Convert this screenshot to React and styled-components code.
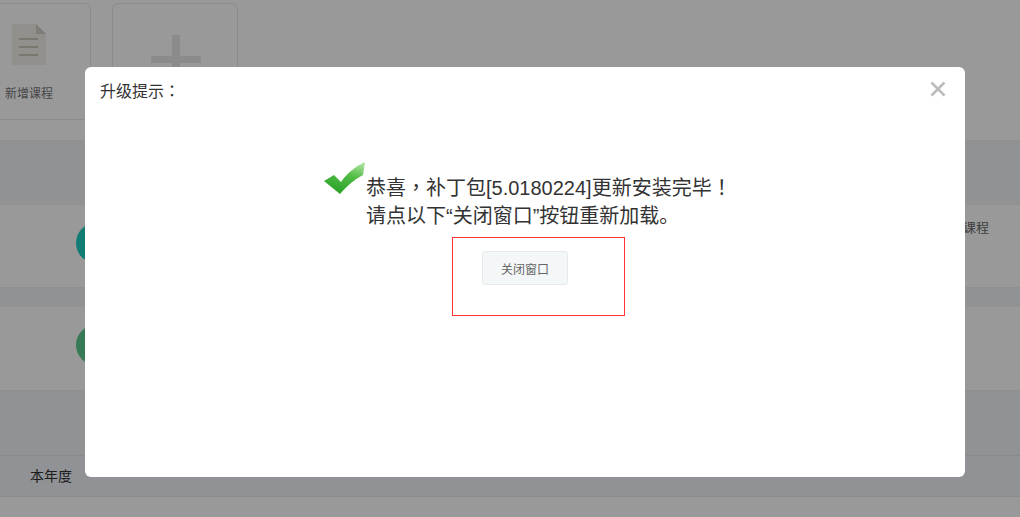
import React from "react";
import styled, { createGlobalStyle } from "styled-components";

const Global = createGlobalStyle`
  html, body { margin: 0; padding: 0; height: 100%; overflow: hidden; background: #fff; }
  body { font-family: "Liberation Sans", "Noto Sans CJK SC", sans-serif; color: #333; }
`;
const Page = styled.div`position: relative; width: 1020px; height: 517px; overflow: hidden; background: #fff;`;
const Shortcuts = styled.div`display: flex; gap: 21px; height: 141px; box-sizing: border-box; padding: 3px 0 0; margin-left: -35px; border-bottom: 1px solid #eee;`;
const Shortcut = styled.div`
  box-sizing: border-box; width: 126px; height: 117px; border: 1px solid #e8e8e8; border-radius: 6px; padding-left: ${p => p.$nudge || 0}px;
  display: flex; flex-direction: column; align-items: center; color: #777; font-size: 12px; overflow: hidden;
`;
const ShortcutLabel = styled.div`margin-top: 19px; line-height: 18px;`;
const DocIcon = styled.svg`width: 36px; height: 42px; margin-top: 20px; display: block;`;
const PlusIcon = styled.svg`width: 50px; height: 50px; margin-top: 31px; display: block;`;
const Band = styled.div`height: ${p => p.$h}px; background: #f2f4f7;`;
const Row = styled.div`
  height: ${p => p.$h}px; background: #fff; box-sizing: border-box; display: flex; justify-content: space-between;
  padding: 0 31px 0 76px; border-bottom: 1px solid #eee;
`;
const Dot = styled.div`width: 40px; height: 40px; border-radius: 50%; background: ${p => p.$c}; margin-top: 18px;`;
const RowAction = styled.div`font-size: 13px; color: #666; line-height: 16px; margin-top: 15px;`;
const TableHead = styled.div`
  height: 42px; box-sizing: border-box; background: #f0f3f9; border-top: 1px solid #e4e6ea; border-bottom: 1px solid #e4e6ea;
  padding-left: 30px; font-size: 14px; line-height: 40px; color: #333;
`;
const Overlay = styled.div`position: absolute; inset: 0; background: rgba(0,0,0,.4);`;
const Modal = styled.div`
  position: absolute; left: 85px; top: 67px; width: 880px; height: 410px; background: #fff; border-radius: 6px;
  box-sizing: border-box; padding: 15px 15px; color: #333;
`;
const ModalTitle = styled.div`font-size: 16px; line-height: 20px; color: #333;`;
const Punct = styled.span`font-family: "Noto Sans CJK TC", sans-serif; line-height: 0;`;
const CloseButton = styled.svg`position: absolute; right: 19px; top: 14px; width: 16px; height: 16px;`;
const Message = styled.div`display: flex; justify-content: center; margin-top: 59px;`;
const CheckIcon = styled.svg`width: 42px; height: 34px; flex: none; display: block;`;
const MessageText = styled.div`font-size: 20px; line-height: 28px; margin-top: 13px; color: #333; width: 360px; white-space: nowrap;`;
const ActionBox = styled.div`
  box-sizing: border-box; width: 173px; height: 79px; border: 1px solid #f33; margin: 7px 0 0 352px; padding: 13px 0 0 29px;
`;
const CloseWindow = styled.button`
  box-sizing: border-box; width: 86px; height: 34px; border: 1px solid #e6eaed; border-radius: 3px; background: #f4f7f8;
  font: 12px "Liberation Sans", "Noto Sans CJK SC", sans-serif; color: #666; padding: 0; display: block;
`;

export default function App() {
  return (
    <Page>
      <Global />
      <Shortcuts>
        <Shortcut $nudge={2}>
          <DocIcon viewBox="0 0 36 42">
            <path d="M1 0H25L35 10V41H1Z" fill="#f4f0eb" />
            <path d="M25 0L35 10H25Z" fill="#d8cfc4" />
            <path d="M8 15H27M8 23H27M8 31H27" stroke="#cfc6ba" strokeWidth="2" />
          </DocIcon>
          <ShortcutLabel>新增课程</ShortcutLabel>
        </Shortcut>
        <Shortcut $nudge={2}>
          <PlusIcon viewBox="0 0 50 50">
            <path d="M21 0H29V21H50V28H29V50H21V28H0V21H21Z" fill="#e8e8e8" />
          </PlusIcon>
        </Shortcut>
      </Shortcuts>
      <Band $h={64} />
      <Row $h={83}>
        <Dot $c="#1fd0c4" />
        <RowAction>课程</RowAction>
      </Row>
      <Band $h={19} />
      <Row $h={84}>
        <Dot $c="#5fcb8f" />
      </Row>
      <Band $h={64} />
      <TableHead>本年度</TableHead>
      <Overlay />
      <Modal>
        <ModalTitle>升级提示<Punct>：</Punct></ModalTitle>
        <CloseButton viewBox="0 0 16 16">
          <path d="M1.5 1.5L14.5 14.5M14.5 1.5L1.5 14.5" stroke="#bdbdbd" strokeWidth="2.6" />
        </CloseButton>
        <Message>
          <CheckIcon viewBox="0 0 42 34">
            <defs>
              <linearGradient id="chk" x1="0.7" y1="0" x2="0.35" y2="1">
                <stop offset="0" stopColor="#a8e09a" />
                <stop offset="0.4" stopColor="#52bd45" />
                <stop offset="1" stopColor="#27a028" />
              </linearGradient>
            </defs>
            <path d="M0 20L10 14L17 21C23 12 32 5 41 1L39 14C31 18 23 25 16 33Z" fill="url(#chk)" />
          </CheckIcon>
          <MessageText>
            恭喜<Punct>，</Punct>补丁包[5.0180224]更新安装完毕<Punct>！</Punct>
            <br />
            请点以下“关闭窗口”按钮重新加载。
          </MessageText>
        </Message>
        <ActionBox>
          <CloseWindow>关闭窗口</CloseWindow>
        </ActionBox>
      </Modal>
    </Page>
  );
}
